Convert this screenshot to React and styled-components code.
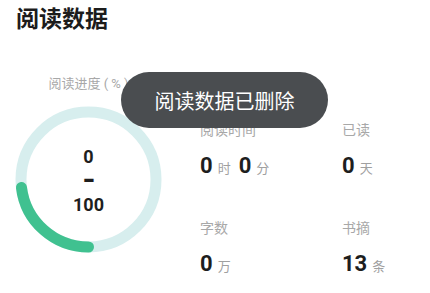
import React from 'react'
import styled, { createGlobalStyle } from 'styled-components'

const GlobalStyle = createGlobalStyle`
  body {
    margin: 0;
    background: #ffffff;
    font-family: Roboto, "Noto Sans CJK SC", sans-serif;
  }
`

const Page = styled.div`
  position: relative;
  width: 430px;
  height: 293px;
  overflow: hidden;
  padding: 4px 0 0 15px;
  box-sizing: border-box;
`

const Title = styled.h1`
  margin: 0 0 0 1px;
  font-size: 23px;
  line-height: 32px;
  font-weight: 700;
  color: #1c1c1c;
`

const Content = styled.div`
  display: flex;
  align-items: flex-start;
  margin-top: 39px;
`

const ProgressColumn = styled.div`
  width: 147px;
  display: flex;
  flex-direction: column;
  align-items: center;
`

const Label = styled.div`
  font-size: ${props => props.size || 14}px;
  line-height: ${props => props.lh || 20}px;
  color: #a8a8a8;
  white-space: pre;
`

const Ring = styled.div`
  display: grid;
  margin-top: 13px;
  width: 147px;
  height: 147px;

  > * {
    grid-area: 1 / 1;
  }
`

const RingText = styled.div`
  display: flex;
  flex-direction: column;
  align-items: center;
  justify-content: center;
  font-size: 18px;
  font-weight: 700;
  line-height: 24px;
  color: #1e1e1e;
  padding-top: 2px;
`

const Dash = styled.span`
  font-weight: 900;
  transform: scaleY(1.4);
`

const Stats = styled.div`
  display: grid;
  grid-template-columns: 142px 1fr;
  row-gap: 37px;
  margin-top: 45px;
  margin-left: 38px;
`

const Stat = styled.div`
  display: flex;
  flex-direction: column;
  gap: 11px;
`

const Value = styled.div`
  font-size: 22px;
  line-height: 30px;
  font-weight: 700;
  color: #1e1e1e;
`

const Unit = styled.span`
  font-size: 13px;
  line-height: 1;
  font-weight: 400;
  color: #a0a0a0;
  margin: 0 8px 0 5px;
`

const Toast = styled.div`
  position: absolute;
  left: 121px;
  top: 72px;
  width: 207px;
  height: 56px;
  border-radius: 28px;
  background: #4a4d50;
  color: #ffffff;
  font-size: 20px;
  display: flex;
  align-items: center;
  justify-content: center;
`

const R = 67.5
const C = 2 * Math.PI * R
const arc = R * (83 * Math.PI / 180)

const ProgressRing = () => (
  <svg width="147" height="147" viewBox="0 0 147 147">
    <circle cx="73.5" cy="73.5" r={R} fill="none" stroke="#d7eeee" strokeWidth="11" />
    <circle
      cx="73.5"
      cy="73.5"
      r={R}
      fill="none"
      stroke="#40c190"
      strokeWidth="11"
      strokeLinecap="round"
      strokeDasharray={`${arc} ${C}`}
      transform="rotate(90 73.5 73.5)"
    />
  </svg>
)

const stats = [
  { label: '阅读时间', parts: [['0', '时'], ['0', '分']] },
  { label: '已读', parts: [['0', '天']] },
  { label: '字数', parts: [['0', '万']] },
  { label: '书摘', parts: [['13', '条']] },
]

export default function App() {
  return (
    <>
      <GlobalStyle />
      <Page>
        <Title>阅读数据</Title>
        <Content>
          <ProgressColumn>
            <Label size={13} lh={18}>阅读进度 ( % )</Label>
            <Ring>
              <ProgressRing />
              <RingText>
                <span>0</span>
                <Dash>–</Dash>
                <span>100</span>
              </RingText>
            </Ring>
          </ProgressColumn>
          <Stats>
            {stats.map(s => (
              <Stat key={s.label}>
                <Label>{s.label}</Label>
                <Value>
                  {s.parts.map(([num, unit], i) => (
                    <React.Fragment key={i}>
                      {num}<Unit>{unit}</Unit>
                    </React.Fragment>
                  ))}
                </Value>
              </Stat>
            ))}
          </Stats>
        </Content>
        <Toast>阅读数据已删除</Toast>
      </Page>
    </>
  )
}
